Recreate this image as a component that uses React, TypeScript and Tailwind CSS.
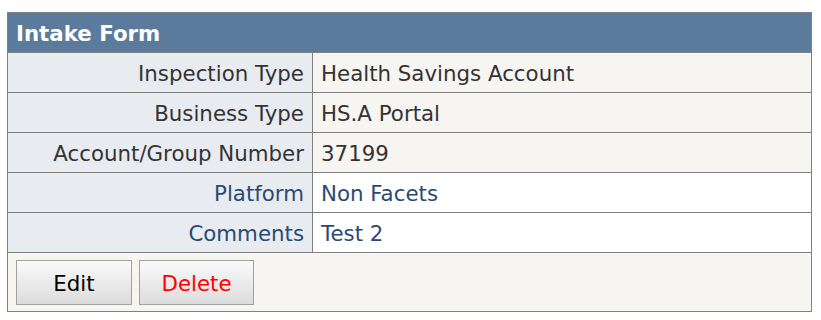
const rows: { label: string; value: string; alt?: boolean }[] = [
  { label: "Inspection Type", value: "Health Savings Account" },
  { label: "Business Type", value: "HS.A Portal" },
  { label: "Account/Group Number", value: "37199" },
  { label: "Platform", value: "Non Facets", alt: true },
  { label: "Comments", value: "Test 2", alt: true },
];

export default function App() {
  return (
    <div className="min-h-[320px] bg-white pl-[7px] pt-[12px] font-['DejaVu_Sans',Verdana,sans-serif] text-[21.33px]">
      <div className="w-[805px] border border-[#808080]">
        <div className="flex h-[40px] items-center border-b border-[#808080] bg-[#5b7b9d] px-[8px] pt-[2px] font-bold text-white">
          Intake Form
        </div>
        {rows.map((r) => (
          <div key={r.label} className="flex h-[40px] border-b border-[#808080]">
            <div
              className={`flex w-[305px] shrink-0 items-center justify-end border-r border-[#808080] bg-[#e8ecf1] pr-[8px] pt-[2px] ${
                r.alt ? "text-[#2b4a73]" : "text-[#333333]"
              }`}
            >
              {r.label}
            </div>
            <div
              className={`flex flex-1 items-center pl-[8px] pt-[2px] ${
                r.alt ? "bg-white text-[#2b4a73]" : "bg-[#f6f5f1] text-[#333333]"
              }`}
            >
              {r.value}
            </div>
          </div>
        ))}
        <div className="flex h-[58px] gap-[7px] bg-[#f6f5f1] pl-[8px] pt-[7px]">
          <button className="h-[45px] w-[116px] border border-[#a0a0a0] bg-gradient-to-b from-[#fafafa] to-[#dcdcdc] pt-[2px] text-black">
            Edit
          </button>
          <button className="h-[45px] w-[115px] border border-[#a0a0a0] bg-gradient-to-b from-[#fafafa] to-[#dcdcdc] pt-[2px] text-[#ff0000]">
            Delete
          </button>
        </div>
      </div>
    </div>
  );
}
